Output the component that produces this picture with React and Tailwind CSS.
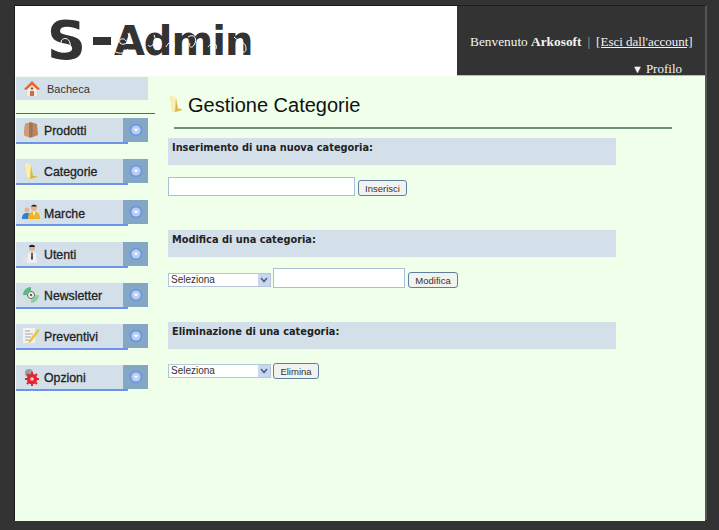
import React from "react";

const sans = "font-['Liberation_Sans',Arial,sans-serif]";

function HomeIcon() {
  return (
    <svg width="18" height="18" viewBox="0 0 18 18">
      <path d="M9 1 L17 9 L14.5 10 L9 5 L3.5 10 L1 9 Z" fill="#e8692c" />
      <path d="M4 9.5 L9 5.5 L14 9.5 V16 H4 Z" fill="#f3ece4" />
      <rect x="7" y="11" width="4" height="5" fill="#c9703f" />
      <circle cx="9" cy="8.5" r="1.2" fill="#b5482a" />
    </svg>
  );
}

function BoxIcon() {
  return (
    <svg width="16" height="18" viewBox="0 0 16 18">
      <path d="M2 3 Q8 0 14 3 L15 14 Q8 18 1 14 Z" fill="#b98562" />
      <path d="M8 1.5 V16.5 Q4 16 1 14 L2 3 Q5 1.5 8 1.5 Z" fill="#d09a78" />
      <rect x="6" y="1.5" width="3.5" height="15" fill="#8f6a50" opacity="0.7" />
    </svg>
  );
}

function FolderIcon() {
  return (
    <svg width="14" height="18" viewBox="0 0 14 18">
      <path d="M1 1 L6 2 L8 14 L11 13 L13 15 L6 17 L3 16 Z" fill="#f3dc86" />
      <path d="M1 1 L4 1 L7 3 L9 14 L6 16 L3 15 Z" fill="#fbeeb0" />
      <path d="M7 3 L9 14 L12 14 L13 15 L6 17 Z" fill="#d9b64f" />
    </svg>
  );
}

function UsersIcon() {
  return (
    <svg width="20" height="16" viewBox="0 0 20 16">
      <circle cx="6" cy="6" r="2.5" fill="#e6b48c" />
      <path d="M1 15 C1 10 3 9 6 9 C9 9 10 10 10 15 Z" fill="#2f7fd6" />
      <circle cx="13" cy="4" r="3" fill="#e6b48c" />
      <path d="M10 2.5 C11 0 15 0 16 2.5 Z" fill="#222222" />
      <path d="M7 15 C7 9 9 8 13 8 C17 8 19 9 19 15 Z" fill="#f0b323" />
      <path d="M12 8 H14 L13 13 Z" fill="#ffffff" />
    </svg>
  );
}

function UserIcon() {
  return (
    <svg width="20" height="20" viewBox="0 0 20 20">
      <rect x="1" y="13" width="12" height="6" fill="#dde3e6" />
      <circle cx="11" cy="4" r="3" fill="#e6b48c" />
      <path d="M8 3 C8 0 14 0 14 3 Z" fill="#222222" />
      <path d="M6 19 L7 9 L11 8 L15 9 L16 19 Z" fill="#eef0f2" />
      <path d="M10.3 8.5 H11.7 L12 15 L11 16 L10 15 Z" fill="#444444" />
    </svg>
  );
}

function DiscIcon() {
  return (
    <svg width="18" height="18" viewBox="0 0 18 18">
      <circle cx="9" cy="9" r="8" fill="#cfe3d6" />
      <path d="M9 1 A8 8 0 0 0 1 9 L5 9 A4 4 0 0 1 9 5 Z" fill="#58b883" />
      <path d="M9 17 A8 8 0 0 0 17 9 L13 9 A4 4 0 0 1 9 13 Z" fill="#8fcfa8" />
      <circle cx="9" cy="9" r="3.5" fill="#f4f6f4" stroke="#666666" />
      <circle cx="9" cy="9" r="1.3" fill="#666666" />
    </svg>
  );
}

function NoteIcon() {
  return (
    <svg width="18" height="18" viewBox="0 0 18 18">
      <rect x="1" y="1" width="12" height="15" fill="#f4f4ef" />
      <path d="M3 4 H8 M3 7 H11 M3 10 H9 M3 13 H7" stroke="#9aa5ad" strokeWidth="1" />
      <path d="M16 2 L17.5 3.5 L9 15 L6.5 16 L7 13.5 Z" fill="#efc02f" />
    </svg>
  );
}

function GearIcon() {
  return (
    <svg width="18" height="18" viewBox="0 0 18 18">
      <circle cx="7" cy="5" r="4" fill="#9b9ea3" />
      <circle cx="10" cy="11" r="5.2" fill="#e3262e" />
      <path d="M10 4 V18 M3 11 H17 M5 6 L15 16 M15 6 L5 16" stroke="#e3262e" strokeWidth="2" />
      <circle cx="10" cy="11" r="1.8" fill="#f5d0d0" />
    </svg>
  );
}

function ArrowButton() {
  return (
    <div className="flex w-[25px] items-center justify-center bg-[#85a7c6]">
      <svg width="14" height="14" viewBox="0 0 14 14">
        <circle cx="7" cy="7" r="6.5" fill="#6f97e0" />
        <circle cx="7" cy="7" r="4.6" fill="#b9cff2" />
        <path d="M4.5 5.8 H9.5 L7 8.6 Z" fill="#ffffff" />
      </svg>
    </div>
  );
}

const menu = [
  { label: "Prodotti", icon: <BoxIcon /> },
  { label: "Categorie", icon: <FolderIcon /> },
  { label: "Marche", icon: <UsersIcon /> },
  { label: "Utenti", icon: <UserIcon /> },
  { label: "Newsletter", icon: <DiscIcon /> },
  { label: "Preventivi", icon: <NoteIcon /> },
  { label: "Opzioni", icon: <GearIcon /> },
];

function MenuItem({ label, icon }) {
  return (
    <div className="relative flex h-[24px] w-[132px]">
      <div className="flex flex-1 items-center bg-[#d3dfe9]">
        <div className="flex w-[28px] justify-center pl-[1px]">{icon}</div>
        <span className="pt-[3px] text-[12.3px] text-[#222] [-webkit-text-stroke:0.3px_#222]">{label}</span>
      </div>
      <ArrowButton />
      <div className="absolute bottom-[-2px] left-0 h-[2px] w-[112px] bg-[#6d94e8]" />
    </div>
  );
}

function SectionBar({ children }) {
  return (
    <div className="h-[27px] w-[448px] bg-[#d3dfe9] pl-[4px] pt-[3px] font-['DejaVu_Sans',Verdana,sans-serif] text-[9.8px] font-bold leading-[14px] text-[#222]">
      {children}
    </div>
  );
}

function FormButton({ children, w }) {
  return (
    <button className={`block h-[16px] rounded-[3px] border border-[#5f7f9f] bg-[#f2f2ee] text-[9.5px] leading-[13px] text-[#333] ${w}`}>
      {children}
    </button>
  );
}

function SelectBox() {
  return (
    <div className="relative h-[14px] w-[103px] border border-[#b5c7d6] bg-white">
      <select className="block h-[12px] w-full appearance-none pl-[2px] text-[10px] leading-[12px] text-[#333] outline-none">
        <option>Seleziona</option>
      </select>
      <div className="absolute right-0 top-0 flex h-[12px] w-[12px] items-center justify-center bg-[#c9d6f0]">
        <svg width="8" height="6" viewBox="0 0 8 6">
          <path d="M1 1 L4 4.5 L7 1" fill="none" stroke="#4d6185" strokeWidth="1.6" />
        </svg>
      </div>
    </div>
  );
}

function LogoSwirls() {
  return (
    <svg className="absolute left-[33px] top-[15px]" width="206" height="42" viewBox="0 0 206 42" fill="none" stroke="#ffffff" strokeWidth="1">
      <path d="M6 28 C14 34 24 30 22 22 C20 14 10 18 14 24 M20 10 C26 14 32 12 34 8" />
      <path d="M80 12 C84 20 76 26 72 22 C70 18 76 16 78 20 M66 30 C72 34 78 32 80 28" />
      <path d="M106 14 C110 22 102 28 100 24 M118 26 C122 18 128 20 126 26 M140 16 C146 12 150 18 146 24 C144 28 140 26 142 22" />
      <path d="M160 26 C164 20 170 22 168 28 M186 16 C192 22 198 20 198 28 C198 32 194 32 194 28" />
    </svg>
  );
}

export default function App() {
  return (
    <div className={`h-[530px] w-[719px] overflow-hidden bg-[#333333] pl-[14px] pt-[5px] ${sans}`}>
      <div className="h-[515px] w-[693px] border-l border-t border-[#1c1c1c] border-r-2 border-r-[#555]">
        {/* header */}
        <div className="flex h-[70px]">
          <div className="relative flex w-[442px] items-center bg-white pb-[1px] pl-[32px] text-[#333]">
            <span className="font-['DejaVu_Sans',sans-serif] text-[54px] font-bold leading-none">S</span>
            <span className="ml-[7px] h-[8px] w-[18px] bg-[#333]" />
            <span className="ml-[3px] font-['DejaVu_Sans',sans-serif] text-[40px] font-bold leading-none tracking-[-1px]">
              Admin
            </span>
            <LogoSwirls />
          </div>
          <div className="flex-1 border-b border-[#bbb] bg-[#333333] font-['Liberation_Serif',serif] text-[13.33px] text-[#f2f2f2]">
            <div className="whitespace-nowrap pl-[13px] pt-[28px] leading-[16px]">
              Benvenuto <b>Arkosoft</b>
              <span className="mx-[6px] text-[#aaa]">|</span>
              <span className="text-[13px] underline">[Esci dall'account]</span>
            </div>
            <div className="pl-[175px] pt-[12px] text-[13px] leading-[14px]">
              <span className="mr-[3px] text-[11px]">▼</span>Profilo
            </div>
          </div>
        </div>

        {/* body */}
        <div className="flex h-[445px] bg-[#efffea]">
          <aside className="w-[153px] shrink-0 pl-[1px] pt-[1px]">
            <div className="flex h-[23px] w-[132px] items-center bg-[#d3dfe9] text-[11px] text-[#333]">
              <div className="flex w-[31px] justify-center">
                <HomeIcon />
              </div>
              <span className="pt-[2px]">Bacheca</span>
            </div>
            <div className="mt-[13px] h-[1px] w-[139px] bg-[#4d6f5c]" />
            <div className="mt-[4px] flex flex-col gap-[17.2px]">
              {menu.map((item) => (
                <MenuItem key={item.label} {...item} />
              ))}
            </div>
          </aside>

          <main className="flex-1 pt-[1px]">
            <div className="flex h-[50px] items-start pl-[1px] pt-[18px]">
              <FolderIcon />
              <h1 className="ml-[5px] mt-[-4px] text-[20px] leading-[28px] text-[#111]">Gestione Categorie</h1>
            </div>
            <div className="ml-[6px] h-[2px] w-[498px] bg-[#6f8f7a]" />

            <div className="mt-[9px]">
              <SectionBar>Inserimento di una nuova categoria:</SectionBar>
              <div className="mt-[12px] flex items-end gap-[3px]">
                <input className="h-[19px] w-[187px] border border-[#a9c0d3] bg-white" />
                <FormButton w="w-[49px]">Inserisci</FormButton>
              </div>

              <div className="mt-[34px]">
                <SectionBar>Modifica di una categoria:</SectionBar>
              </div>
              <div className="mt-[11px] flex h-[20px] items-end gap-[2px]">
                <div className="mb-[1px]">
                  <SelectBox />
                </div>
                <input className="h-[20px] w-[132px] border border-[#a9c0d3] bg-white" />
                <div className="ml-[1px]">
                  <FormButton w="w-[50px]">Modifica</FormButton>
                </div>
              </div>

              <div className="mt-[34px]">
                <SectionBar>Eliminazione di una categoria:</SectionBar>
              </div>
              <div className="mt-[14px] flex items-center gap-[2px]">
                <SelectBox />
                <FormButton w="w-[46px]">Elimina</FormButton>
              </div>
            </div>
          </main>
        </div>
      </div>
    </div>
  );
}
